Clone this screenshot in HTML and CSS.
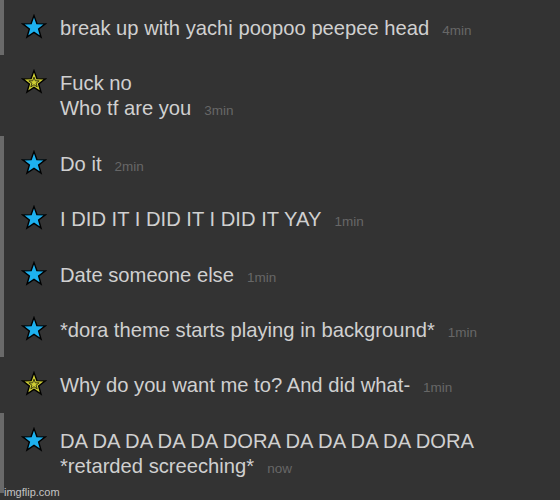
FILE: index.html
```html
<!DOCTYPE html>
<html>
<head>
<meta charset="utf-8">
<link rel="stylesheet" href="styles.css">
</head>
<body>
<div class="chat">
  <div class="group mine">
    <div class="msg">
      <svg class="star" viewBox="0 0 24 24"><polygon class="blue" points="12,1.5 14.65,8.86 22.46,9.1 16.28,13.89 18.47,21.4 12,17 5.53,21.4 7.72,13.89 1.54,9.1 9.35,8.86"/></svg>
      <div class="body"><span class="text">break up with yachi poopoo peepee head</span><span class="time">4min</span></div>
    </div>
  </div>
  <div class="group theirs">
    <div class="msg">
      <svg class="star" viewBox="0 0 24 24"><polygon class="yellow" points="12,1.5 14.65,8.86 22.46,9.1 16.28,13.89 18.47,21.4 12,17 5.53,21.4 7.72,13.89 1.54,9.1 9.35,8.86"/><polygon class="inner" points="12,7.5 13.18,10.88 16.76,10.95 13.9,13.12 14.94,16.55 12,14.5 9.06,16.55 10.1,13.12 7.24,10.95 10.82,10.88"/></svg>
      <div class="body"><span class="text">Fuck no<br>Who tf are you</span><span class="time">3min</span></div>
    </div>
  </div>
  <div class="group mine">
    <div class="msg">
      <svg class="star" viewBox="0 0 24 24"><polygon class="blue" points="12,1.5 14.65,8.86 22.46,9.1 16.28,13.89 18.47,21.4 12,17 5.53,21.4 7.72,13.89 1.54,9.1 9.35,8.86"/></svg>
      <div class="body"><span class="text">Do it</span><span class="time">2min</span></div>
    </div>
    <div class="msg">
      <svg class="star" viewBox="0 0 24 24"><polygon class="blue" points="12,1.5 14.65,8.86 22.46,9.1 16.28,13.89 18.47,21.4 12,17 5.53,21.4 7.72,13.89 1.54,9.1 9.35,8.86"/></svg>
      <div class="body"><span class="text">I DID IT I DID IT I DID IT YAY</span><span class="time">1min</span></div>
    </div>
    <div class="msg">
      <svg class="star" viewBox="0 0 24 24"><polygon class="blue" points="12,1.5 14.65,8.86 22.46,9.1 16.28,13.89 18.47,21.4 12,17 5.53,21.4 7.72,13.89 1.54,9.1 9.35,8.86"/></svg>
      <div class="body"><span class="text">Date someone else</span><span class="time">1min</span></div>
    </div>
    <div class="msg">
      <svg class="star" viewBox="0 0 24 24"><polygon class="blue" points="12,1.5 14.65,8.86 22.46,9.1 16.28,13.89 18.47,21.4 12,17 5.53,21.4 7.72,13.89 1.54,9.1 9.35,8.86"/></svg>
      <div class="body"><span class="text">*dora theme starts playing in background*</span><span class="time">1min</span></div>
    </div>
  </div>
  <div class="group theirs">
    <div class="msg">
      <svg class="star" viewBox="0 0 24 24"><polygon class="yellow" points="12,1.5 14.65,8.86 22.46,9.1 16.28,13.89 18.47,21.4 12,17 5.53,21.4 7.72,13.89 1.54,9.1 9.35,8.86"/><polygon class="inner" points="12,7.5 13.18,10.88 16.76,10.95 13.9,13.12 14.94,16.55 12,14.5 9.06,16.55 10.1,13.12 7.24,10.95 10.82,10.88"/></svg>
      <div class="body"><span class="text">Why do you want me to? And did what-</span><span class="time">1min</span></div>
    </div>
  </div>
  <div class="group mine">
    <div class="msg">
      <svg class="star" viewBox="0 0 24 24"><polygon class="blue" points="12,1.5 14.65,8.86 22.46,9.1 16.28,13.89 18.47,21.4 12,17 5.53,21.4 7.72,13.89 1.54,9.1 9.35,8.86"/></svg>
      <div class="body"><span class="text">DA DA DA DA DA DORA DA DA DA DA DORA<br>*retarded screeching*</span><span class="time">now</span></div>
    </div>
  </div>
</div>
<div class="watermark">imgflip.com</div>
</body>
</html>
```

FILE: styles.css
```css
html, body {
  margin: 0;
  padding: 0;
}
body {
  background: #333333;
  width: 560px;
  height: 500px;
  overflow: hidden;
  position: relative;
  font-family: "Liberation Sans", Arial, sans-serif;
}
.chat {
  display: flex;
  flex-direction: column;
}
.group {
  border-left: 4px solid transparent;
}
.group.mine {
  border-left-color: #6a6a6a;
}
.msg {
  display: flex;
  align-items: flex-start;
  padding: 16px 0 14.4px 17px;
}
.star {
  width: 26px;
  height: 26px;
  flex: none;
  margin-top: -2px;
  margin-right: 13px;
}
.blue {
  fill: #1db1ef;
  stroke: #000;
  stroke-width: 1.3;
}
.yellow {
  fill: #cfcf34;
  stroke: #000;
  stroke-width: 1.3;
}
.inner {
  fill: none;
  stroke: #3a3a10;
  stroke-width: 0.9;
}
.body {
  color: #d0d0d0;
  font-size: 20.2px;
  line-height: 25px;
}
.time {
  color: #676767;
  font-size: 13.5px;
  line-height: 1;
  margin-left: 13px;
}
.watermark {
  position: absolute;
  left: 4px;
  bottom: 2px;
  font-size: 11px;
  color: #c4c4c4;
  line-height: 12px;
}
```
